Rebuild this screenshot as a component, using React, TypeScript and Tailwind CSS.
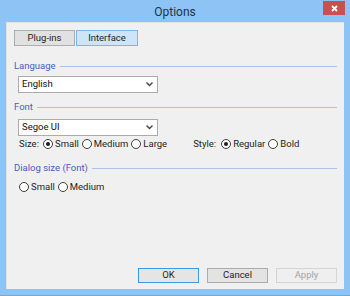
import React from "react";

function Radio({ checked, label }: { checked?: boolean; label: string }) {
  return (
    <label className="flex items-center gap-[2px]">
      <span className="w-[10px] h-[10px] rounded-full border border-[#3d3d3d] bg-white flex items-center justify-center">
        {checked && <span className="w-[4px] h-[4px] rounded-full bg-[#1a1a1a]" />}
      </span>
      <span>{label}</span>
    </label>
  );
}

function GroupHeader({ title }: { title: string }) {
  return (
    <div className="flex items-center gap-[4px] h-[13px]">
      <span className="text-[#4a5bc4]">{title}</span>
      <div className="flex-1 h-px bg-[#a9c3ea]" />
    </div>
  );
}

function Select({ value }: { value: string }) {
  return (
    <div className="ml-[4px] w-[140px] h-[17px] bg-white border border-[#ababab] flex items-center justify-between pl-[3px] pr-[4px]">
      <span className="text-[#111]">{value}</span>
      <svg width="7" height="5" viewBox="0 0 7 5">
        <path d="M0.5 0.5 L3.5 3.5 L6.5 0.5" fill="none" stroke="#444" strokeWidth="1.4" />
      </svg>
    </div>
  );
}

export default function App() {
  return (
    <div
      className="w-[350px] h-[296px] bg-[#8dc4f5] border-b border-[#6fa8dc] flex flex-col text-[9.5px] text-[#1e1e1e]"
      style={{ fontFamily: 'Roboto, "Noto Sans", sans-serif' }}
    >
      <div className="h-[22px] grid grid-cols-[1fr_auto_1fr] items-center">
        <div />
        <div className="text-[12px] text-[#223344] pt-[1px]">Options</div>
        <div className="flex justify-end self-start pr-[5px] pt-[1px]">
          <div className="w-[22px] h-[14px] bg-[#c75050] flex items-center justify-center">
            <svg width="7" height="7" viewBox="0 0 7 7">
              <path d="M1 1 L6 6 M6 1 L1 6" stroke="#fff" strokeWidth="1.8" />
            </svg>
          </div>
        </div>
      </div>

      <div className="mx-[6px] h-[267px] bg-[#f0f0f0] border-l border-t border-[#e2e2e2] flex flex-col px-[7px] pt-[7px] pb-[6px]">
        <div className="flex gap-px">
          <div className="w-[61px] h-[16px] bg-[#e1e1e1] border border-[#adadad] flex items-center justify-center">
            Plug-ins
          </div>
          <div className="w-[62px] h-[16px] bg-[#cde5f8] border border-[#7eb4ea] flex items-center justify-center">
            Interface
          </div>
        </div>

        <div className="mt-[14px]">
          <GroupHeader title="Language" />
        </div>
        <div className="mt-[3px]">
          <Select value="English" />
        </div>

        <div className="mt-[8px]">
          <GroupHeader title="Font" />
        </div>
        <div className="mt-[5px]">
          <Select value="Segoe UI" />
        </div>
        <div className="mt-[2px] ml-[5px] flex items-center h-[12px]">
          <span className="w-[24px]">Size:</span>
          <div className="flex items-center gap-[3px]">
            <Radio checked label="Small" />
            <Radio label="Medium" />
            <Radio label="Large" />
          </div>
          <span className="ml-[26px] w-[28px]">Style:</span>
          <div className="flex items-center gap-[3px]">
            <Radio checked label="Regular" />
            <Radio label="Bold" />
          </div>
        </div>

        <div className="mt-[12px]">
          <GroupHeader title="Dialog size (Font)" />
        </div>
        <div className="mt-[6px] ml-[5px] flex items-center gap-[3px] h-[12px]">
          <Radio label="Small" />
          <Radio label="Medium" />
        </div>

        <div className="mt-auto flex justify-end gap-[8px]">
          <button className="w-[61px] h-[15px] bg-[#e5e5e5] border border-[#3c99e3] flex items-center justify-center">
            OK
          </button>
          <button className="w-[61px] h-[15px] bg-[#e3e3e3] border border-[#acacac] flex items-center justify-center">
            Cancel
          </button>
          <button className="w-[61px] h-[15px] bg-[#efefef] border border-[#d5d5d5] text-[#a3a3a3] flex items-center justify-center">
            Apply
          </button>
        </div>
      </div>
    </div>
  );
}
